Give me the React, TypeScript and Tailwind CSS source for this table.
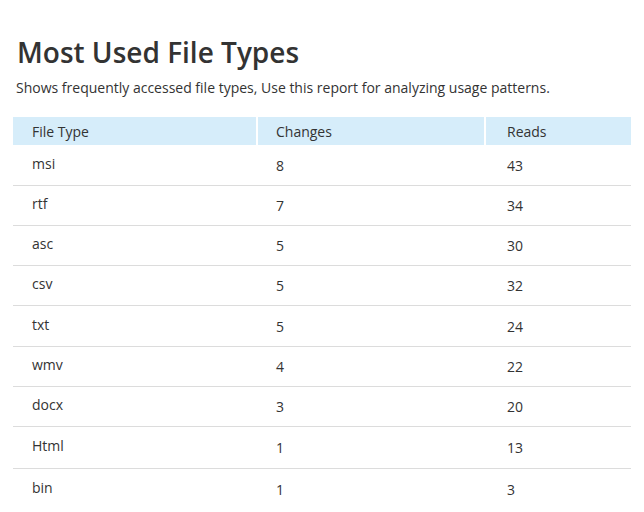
import React from "react";

const rows = [
    { type: "msi", changes: "8", reads: "43", h: "h-[41px]" },
    { type: "rtf", changes: "7", reads: "34", h: "h-[40px]" },
    { type: "asc", changes: "5", reads: "30", h: "h-[40px]" },
    { type: "csv", changes: "5", reads: "32", h: "h-[40px]" },
    { type: "txt", changes: "5", reads: "24", h: "h-[41px]" },
    { type: "wmv", changes: "4", reads: "22", h: "h-[40px]" },
    { type: "docx", changes: "3", reads: "20", h: "h-[40px]" },
    { type: "Html", changes: "1", reads: "13", h: "h-[42px]" },
    { type: "bin", changes: "1", reads: "3", h: "h-[40px]" },
];

function App() {
    return (
        <div className="min-h-[512px] w-[644px] bg-white pt-[34px] text-[#333] font-['Open_Sans',sans-serif]">
            <h1 className="pl-[17px] text-[28px] font-semibold leading-[36px]">Most Used File Types</h1>
            <p className="mt-[8px] pl-[16px] text-[14px] leading-[20px]">
                Shows frequently accessed file types, Use this report for analyzing usage patterns.
            </p>
            <div className="ml-[13px] mt-[19px] w-[618px] text-[14px]">
                <div className="flex h-[28px] gap-[2px]">
                    <div className="flex w-[243px] items-center bg-[#d6edfa] pl-[19px]">File Type</div>
                    <div className="flex w-[226px] items-center bg-[#d6edfa] pl-[18px]">Changes</div>
                    <div className="flex flex-1 items-center bg-[#d6edfa] pl-[21px]">Reads</div>
                </div>
                {rows.map((r, i) => (
                    <div
                        key={r.type}
                        className={`flex items-center ${r.h} ${i < rows.length - 1 ? "border-b border-[#dcdcdc]" : ""}`}
                    >
                        <div className="mb-[4px] w-[245px] pl-[19px]">{r.type}</div>
                        <div className="w-[228px] pl-[18px]">{r.changes}</div>
                        <div className="flex-1 pl-[21px]">{r.reads}</div>
                    </div>
                ))}
            </div>
        </div>
    );
}

export default App;
